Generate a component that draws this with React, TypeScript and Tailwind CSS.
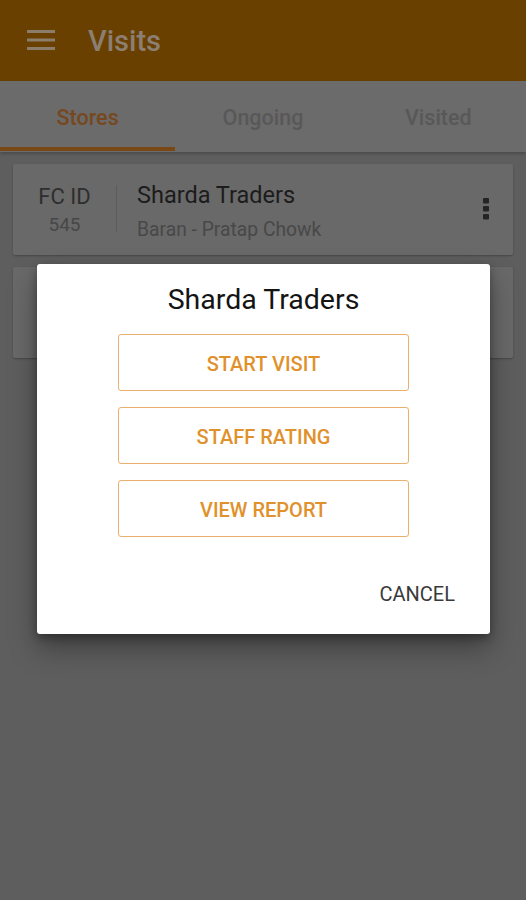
import React from "react";

function Card({ children }: { children?: React.ReactNode }) {
  return (
    <div className="h-[91px] rounded-[2px] bg-[#696969] shadow-[0_1px_2px_rgba(0,0,0,0.25)] flex items-start">
      {children}
    </div>
  );
}

function OutlineButton({ label }: { label: string }) {
  return (
    <div className="h-[57px] w-[291px] rounded-[3px] border-[1.5px] border-[#eab06e] flex items-center justify-center text-[20px] font-medium text-[#e0912c] pt-[2px]">
      {label}
    </div>
  );
}

export default function App() {
  return (
    <div className="relative w-[526px] h-[900px] overflow-hidden bg-[#5e5e5e] font-['Roboto',sans-serif]">
      {/* App bar */}
      <div className="h-[81px] bg-[#6a4000] flex items-center pl-[27px]">
        <svg width="28" height="20" viewBox="0 0 28 20" className="mt-[-2px]">
          <rect x="0" y="0" width="28" height="3" fill="#8a7d6a" />
          <rect x="0" y="8.5" width="28" height="3" fill="#8a7d6a" />
          <rect x="0" y="17" width="28" height="3" fill="#8a7d6a" />
        </svg>
        <div className="ml-[33px] text-[29px] font-medium text-[#8a7f72] leading-none mt-[2px]">Visits</div>
      </div>

      {/* Tabs */}
      <div className="h-[71px] bg-[#6b6b6b] grid grid-cols-3 shadow-[0_2px_3px_rgba(0,0,0,0.2)] relative">
        <div className="relative flex items-center justify-center pt-[3px] text-[21.5px] font-medium text-[#76481f]">
          Stores
          <div className="absolute left-0 right-0 bottom-[1px] h-[4px] bg-[#7a4814]" />
        </div>
        <div className="flex items-center justify-center pt-[3px] text-[21.5px] font-medium text-[#585858]">Ongoing</div>
        <div className="flex items-center justify-center pt-[3px] text-[21.5px] font-medium text-[#585858]">Visited</div>
      </div>

      {/* List */}
      <div className="px-[13px] pt-[12px] flex flex-col gap-[12px]">
        <Card>
          <div className="w-[103px] flex flex-col items-center pt-[20px]">
            <div className="text-[22px] leading-[26px] text-[#2e2e2e]">FC ID</div>
            <div className="text-[19px] leading-[22px] text-[#474747] mt-[4px]">545</div>
          </div>
          <div className="w-px h-[47px] mt-[21px] bg-[#5c5c5c]" />
          <div className="flex-1 pl-[20px] pt-[17px] flex flex-col">
            <div className="text-[23.5px] leading-[28px] text-[#1c1c1c]">Sharda Traders</div>
            <div className="text-[19.3px] leading-[24px] text-[#484848] mt-[9px]">Baran - Pratap Chowk</div>
          </div>
          <div className="w-[56px] flex justify-center pt-[34px]">
            <svg width="6" height="22" viewBox="0 0 6 22" className="mr-[-2px]">
              <rect x="0" y="0" width="6" height="5.5" rx="1" fill="#242424" />
              <rect x="0" y="8" width="6" height="5.5" rx="1" fill="#242424" />
              <rect x="0" y="16" width="6" height="5.5" rx="1" fill="#242424" />
            </svg>
          </div>
        </Card>
        <Card />
      </div>

      {/* Dialog */}
      <div className="absolute left-[37px] top-[264px] w-[453px] h-[370px] rounded-[3px] bg-white shadow-[0_14px_28px_rgba(0,0,0,0.35),0_4px_8px_rgba(0,0,0,0.3)] flex flex-col items-center">
        <div className="mt-[19px] text-[28.5px] leading-[34px] text-[#141414]">Sharda Traders</div>
        <div className="mt-[17px] flex flex-col gap-[16px]">
          <OutlineButton label="START VISIT" />
          <OutlineButton label="STAFF RATING" />
          <OutlineButton label="VIEW REPORT" />
        </div>
        <div className="self-end mr-[35px] mt-[45px] text-[20px] leading-[24px] text-[#3a3a3a]">CANCEL</div>
      </div>
    </div>
  );
}
